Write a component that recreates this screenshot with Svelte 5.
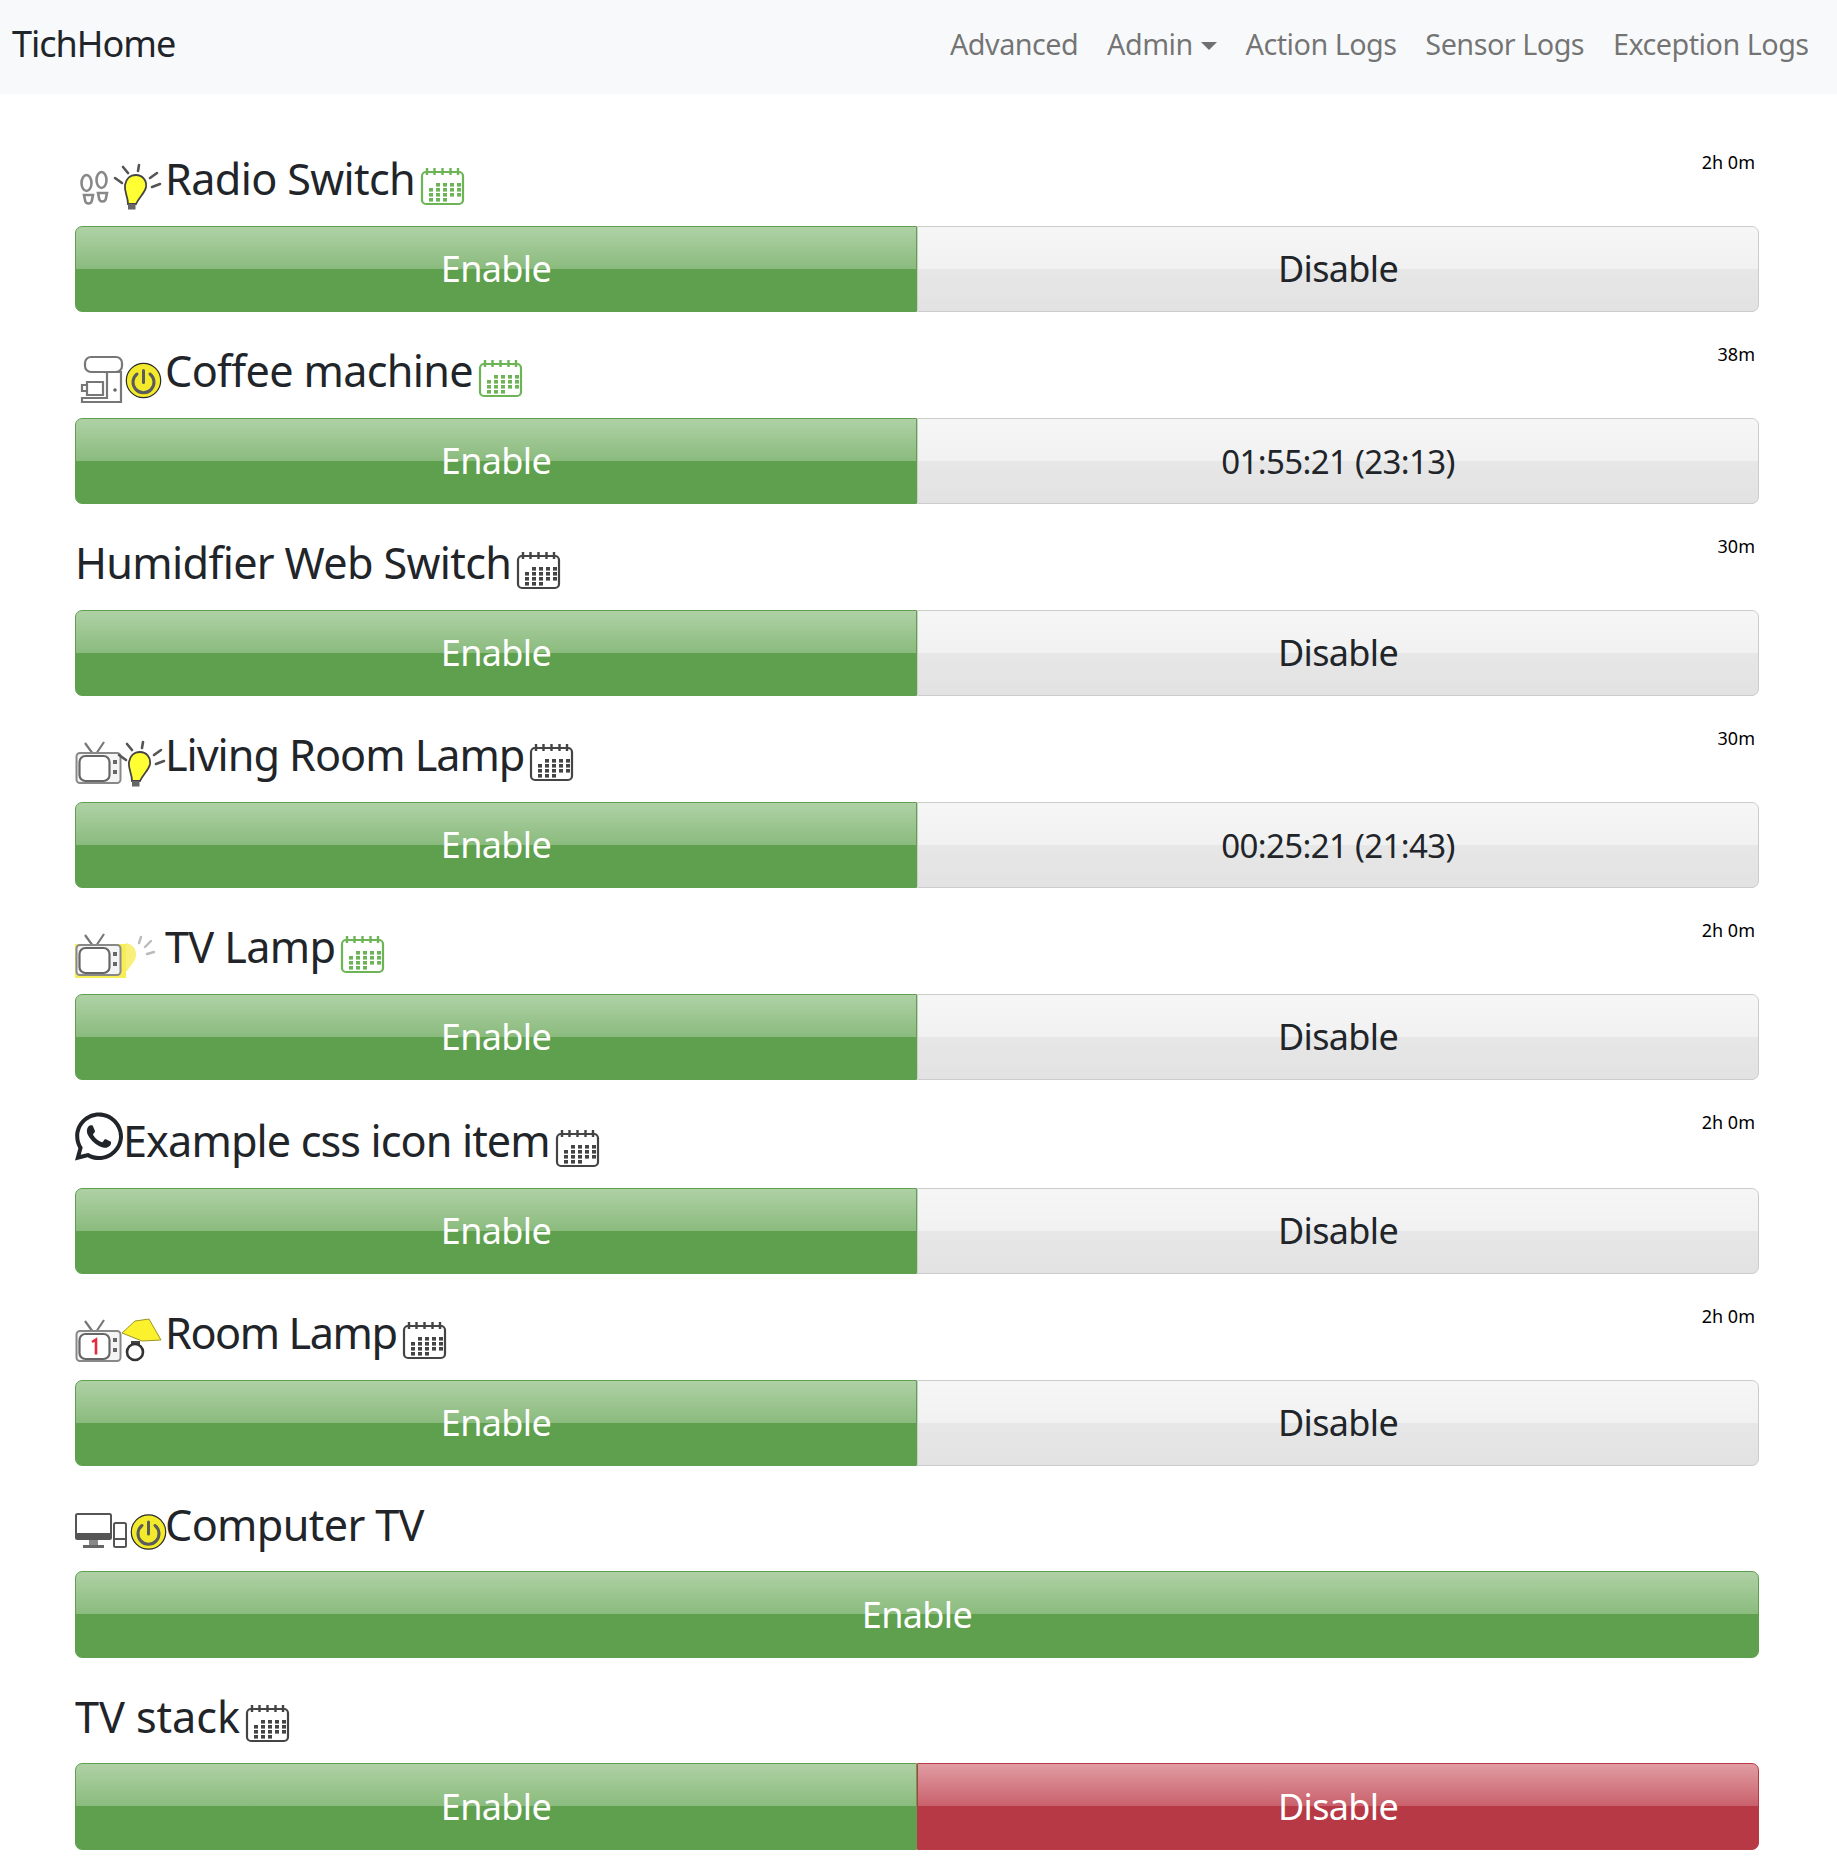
<script>
  const items = [
    { title: 'Radio Switch', icons: ['steps', 'bulb'], cal: 'green', time: '2h 0m', off: 'Disable' },
    { title: 'Coffee machine', icons: ['coffee', 'power'], cal: 'green', time: '38m', off: '01:55:21 (23:13)' },
    { title: 'Humidfier Web Switch', icons: [], cal: 'dark', time: '30m', off: 'Disable' },
    { title: 'Living Room Lamp', icons: ['tv', 'bulbright'], cal: 'dark', time: '30m', off: '00:25:21 (21:43)', ls: '-1.03px' },
    { title: 'TV Lamp', icons: ['tvlit', 'bulbdim'], cal: 'green', time: '2h 0m', off: 'Disable' },
    { title: 'Example css icon item', icons: ['whatsapp'], cal: 'dark', time: '2h 0m', off: 'Disable', tall: true, ls: '-0.89px' },
    { title: 'Room Lamp', icons: ['tvone', 'lamp'], cal: 'dark', time: '2h 0m', off: 'Disable', ls: '-1.44px' },
    { title: 'Computer TV', icons: ['computer', 'powerright'], cal: null, time: '', off: null },
    { title: 'TV stack', icons: [], cal: 'dark', time: '', off: 'Disable', red: true, ls: '-0.07px' }
  ];
  const navLinks = ['Advanced', 'Admin', 'Action Logs', 'Sensor Logs', 'Exception Logs'];
  const calCols = [6, 13, 20, 27, 34];
  const calRows = [
    [1, 2, 3, 4],
    [0, 1, 2, 3, 4],
    [0, 1, 2, 3, 4],
    [0, 1, 2]
  ];
</script>

{#snippet tvBody(lit, one)}
  {#if lit}<rect x="0" y="13" width="51" height="34" fill="#f7ee55" />{/if}
  <path d="M18 15 10 4M21 15 29 3" stroke="#777" stroke-width="2.2" fill="none" />
  <rect x="1.5" y="14" width="44" height="30" rx="3.5" fill="#f4f4f4" stroke="#888" stroke-width="2" />
  <rect x="4.5" y="17" width="30" height="25" rx="6" fill="#fff" stroke="#666" stroke-width="2.2" />
  <rect x="38" y="21" width="4" height="4" fill="#666" />
  <rect x="38" y="31" width="4" height="4" fill="#666" />
  {#if one}<path d="M17 25l4-2.500v15" stroke="#e5283c" stroke-width="2.600" fill="none" />{/if}
{/snippet}

{#snippet bulbShape()}
  <path d="M-5 15 2 20M3 4 8 10M19 2 18 8M37 10 30 15M40 21 32 24" stroke="#555" stroke-width="2.6" stroke-linecap="round" fill="none" />
  <path d="M16 12c6 0 11 5 10 12-1 6-7 10-10 17H8c0-8-4-12-3-19 1-6 5-10 11-10z" fill="#ffff33" stroke="#444" stroke-width="1.8" />
  <rect x="8" y="41" width="7.500" height="5.500" fill="#666" />
{/snippet}

{#snippet powerShape(cx, cy)}
  <circle {cx} {cy} r="17.200" fill="#f3ea2c" stroke="#2b2b2b" stroke-width="1.200" />
  <path d="M{cx - 6.500} {cy - 6.500}a10.500 10.500 0 1 0 13 0" fill="none" stroke="#5b5b5b" stroke-width="3" stroke-linecap="round" />
  <path d="M{cx} {cy - 10}v12" stroke="#5b5b5b" stroke-width="3" stroke-linecap="round" />
{/snippet}

{#snippet icon(name)}
  {#if name === 'whatsapp'}
    <svg class="ic wa" viewBox="0 30 448 452"><path fill="#212529" d="M380.9 97.1C339 55.1 283.2 32 223.9 32c-122.4 0-222 99.6-222 222 0 39.1 10.2 77.3 29.6 111L0 480l117.7-30.9c32.4 17.7 68.9 27 106.1 27h.1c122.3 0 224.1-99.6 224.1-222 0-59.3-25.2-115-67.1-157zm-157 341.6c-33.2 0-65.7-8.9-94-25.7l-6.7-4-69.8 18.3L72 359.2l-4.4-7c-18.5-29.4-28.2-63.3-28.2-98.2 0-101.7 82.8-184.5 184.6-184.5 49.3 0 95.6 19.2 130.4 54.1 34.8 34.9 56.2 81.2 56.1 130.5 0 101.8-84.9 184.6-186.6 184.6zm101.2-138.2c-5.5-2.8-32.8-16.2-37.9-18-5.1-1.9-8.8-2.8-12.5 2.8-3.7 5.6-14.3 18-17.6 21.8-3.2 3.7-6.5 4.2-12 1.4-32.6-16.3-54-29.1-75.5-66-5.7-9.8 5.7-9.1 16.3-30.3 1.8-3.7.9-6.9-.5-9.7-1.4-2.8-12.5-30.1-17.1-41.2-4.5-10.8-9.1-9.3-12.5-9.5-3.2-.2-6.9-.2-10.6-.2-3.7 0-9.7 1.4-14.8 6.9-5.1 5.6-19.4 19-19.4 46.3 0 27.3 19.9 53.7 22.6 57.4 2.8 3.7 39.1 59.7 94.8 83.8 35.2 15.2 49 16.5 66.6 13.9 10.7-1.6 32.8-13.4 37.4-26.4 4.6-13 4.6-24.1 3.2-26.4-1.3-2.5-5-3.9-10.5-6.6z" /></svg>
  {:else}
    <svg class="ic" viewBox="0 0 45 45">
      {#if name === 'steps'}
        <g fill="#fff" stroke="#888" stroke-width="2.600">
          <ellipse cx="11.500" cy="20" rx="5" ry="8" />
          <ellipse cx="26.500" cy="17" rx="5" ry="8" />
          <path d="M9 32h9l-1 5a3.500 3.500 0 0 1-7 0z" />
          <path d="M23 30h9l-1 5a3.500 3.500 0 0 1-7 0z" />
        </g>
      {:else if name === 'bulb'}
        {@render bulbShape()}
      {:else if name === 'bulbright'}
        <g transform="translate(4 1)">{@render bulbShape()}</g>
      {:else if name === 'bulbdim'}
        <path d="M21 6 19 12M31 10 25 16M34 21 27 23" stroke="#bbb" stroke-width="2.400" stroke-linecap="round" fill="none" />
        <path d="M6 12c6 1 11 6 10 13-1 6-5 9-9 15H6z" fill="#f8f07a" />
      {:else if name === 'power'}
        {@render powerShape(23.500, 25.500)}
      {:else if name === 'powerright'}
        {@render powerShape(28.500, 24)}
      {:else if name === 'coffee'}
        <g fill="#fff" stroke="#777" stroke-width="2.200">
          <path d="M32 17h14v30H7v-4h25z" />
          <rect x="10" y="2" width="37" height="15" rx="6" />
          <path d="M12 27h16v13H12zM12 30H7v6h5" />
        </g>
        <circle cx="40" cy="35" r="1.800" fill="#666" />
      {:else if name === 'tv'}
        {@render tvBody(false, false)}
      {:else if name === 'tvlit'}
        {@render tvBody(true, false)}
      {:else if name === 'tvone'}
        {@render tvBody(false, true)}
      {:else if name === 'lamp'}
        <path d="M15 4 29 2 41 23 22 24 2 16z" fill="#fbf12c" stroke="#9c9428" stroke-width="1" />
        <path d="M11 24h9v4h-9z" fill="#444" />
        <circle cx="15" cy="35" r="8" fill="#fff" stroke="#333" stroke-width="2.600" />
      {:else if name === 'computer'}
        <rect x="1" y="6" width="35" height="25" rx="1.500" fill="#fff" stroke="#555" stroke-width="2" />
        <rect x="1" y="25" width="35" height="6" fill="#555" />
        <path d="M14 32h9v5h-9z" fill="#888" />
        <path d="M8 37h21v3H8z" fill="#666" />
        <rect x="39" y="15" width="12" height="24" rx="1.500" fill="#fff" stroke="#555" stroke-width="2" />
        <path d="M39 31h12" stroke="#555" stroke-width="2" />
      {/if}
    </svg>
  {/if}
{/snippet}

{#snippet calendar(tone)}
  <svg class="ic cal {tone}" viewBox="0 0 45 45">
    <rect x="2" y="9" width="41" height="32" rx="4" fill="#fff" stroke="currentColor" stroke-width="2.200" />
    <path d="M7 5v7M14.500 5v7M22.500 5v7M30.500 5v7M38 5v7" stroke="currentColor" stroke-width="2.400" />
    {#each calRows as row, r}
      {#each row as c}
        <rect x={calCols[c] + 3} y={20 + r * 5} width="4" height="3.600" fill="currentColor" />
      {/each}
    {/each}
  </svg>
{/snippet}

<nav class="navbar">
  <span class="brand">TichHome</span>
  <ul class="links">
    {#each navLinks as link}
      <li class:caret={link === 'Admin'}>{link}</li>
    {/each}
  </ul>
</nav>

<main class="list">
  {#each items as item}
    <section class="item">
      <header class="head" class:tall={item.tall}>
        <h2 class="title">
          {#each item.icons as name}{@render icon(name)}{/each}
          <span class="label" style:letter-spacing={item.ls}>{item.title}</span>
          {#if item.cal}{@render calendar(item.cal)}{/if}
        </h2>
        {#if item.time}<small class="time">{item.time}</small>{/if}
      </header>
      <div class="group">
        <button class="btn on">Enable</button>
        {#if item.off}
          <button class="btn" class:off={!item.red} class:danger={item.red} class:clock={item.off.includes(':')}>{item.off}</button>
        {/if}
      </div>
    </section>
  {/each}
</main>

<style>
  :global(body) {
    margin: 0;
    background: #fff;
    color: #212529;
    font-family: "Noto Sans", "Open Sans", sans-serif;
  }
  .navbar {
    height: 94px;
    box-sizing: border-box;
    background: #f8f9fa;
    display: flex;
    align-items: center;
    justify-content: space-between;
    padding: 0 14px 8px 12px;
  }
  .brand {
    font-size: 36px;
    letter-spacing: -1px;
  }
  .links {
    display: flex;
    list-style: none;
    margin: 0;
    padding: 0;
    font-size: 28.8px;
    letter-spacing: -0.52px;
    color: rgba(0, 0, 0, 0.55);
  }
  .links li {
    padding: 0 14.4px;
  }
  .caret::after {
    content: "";
    display: inline-block;
    margin-left: 8px;
    vertical-align: 5px;
    border-top: 8.6px solid;
    border-left: 8.6px solid transparent;
    border-right: 8.6px solid transparent;
  }
  .list {
    padding: 26px 78px 15px 75px;
    box-sizing: border-box;
  }
  .head {
    height: 105.6px;
    box-sizing: border-box;
    display: flex;
    justify-content: space-between;
    align-items: flex-end;
    padding-bottom: 18px;
  }
  .head.tall {
    height: 107.6px;
  }
  .title {
    margin: 0;
    display: flex;
    align-items: flex-end;
    font-weight: 400;
    font-size: 43.2px;
    letter-spacing: -0.66px;
    line-height: 52px;
  }
  .label {
    margin-bottom: 2.5px;
  }
  .ic {
    width: 45px;
    height: 45px;
    flex: none;
    overflow: visible;
    filter: blur(0.4px);
  }
  .ic.wa {
    width: 48px;
    height: 49px;
    margin-bottom: 9px;
  }
  .cal {
    margin-left: 5px;
  }
  .cal.green {
    color: #6cb456;
  }
  .cal.dark {
    color: #444;
  }
  .time {
    align-self: flex-start;
    margin-top: 30px;
    margin-right: 4px;
    font-size: 18px;
    letter-spacing: 0;
    color: #000;
    line-height: 24px;
  }
  .group {
    display: flex;
    height: 86.4px;
  }
  .btn {
    flex: 1 1 0;
    min-width: 0;
    margin: 0;
    padding: 0;
    font: inherit;
    font-size: 36px;
    letter-spacing: -0.65px;
    border-width: 1px;
    border-style: solid;
    border-radius: 0;
  }
  .btn.clock {
    font-size: 33px;
    padding-top: 2px;
  }
  .btn:first-child {
    border-top-left-radius: 7px;
    border-bottom-left-radius: 7px;
  }
  .btn:last-child {
    border-top-right-radius: 7px;
    border-bottom-right-radius: 7px;
  }
  .on {
    color: #fff;
    border-color: #5fa04e;
    background: linear-gradient(#afd1a5 0%, #8abb7d 50%, #5fa04e 50%, #5fa04e 100%);
  }
  .off {
    color: #212529;
    border-color: #ccc;
    background: linear-gradient(#f6f6f6 0%, #f1f1f1 50%, #e7e7e7 50%, #e2e2e2 100%);
  }
  .danger {
    color: #fff;
    border-color: #b73a45;
    background: linear-gradient(#e09ca2 0%, #c9606b 50%, #b73945 50%, #b73945 100%);
  }
</style>
